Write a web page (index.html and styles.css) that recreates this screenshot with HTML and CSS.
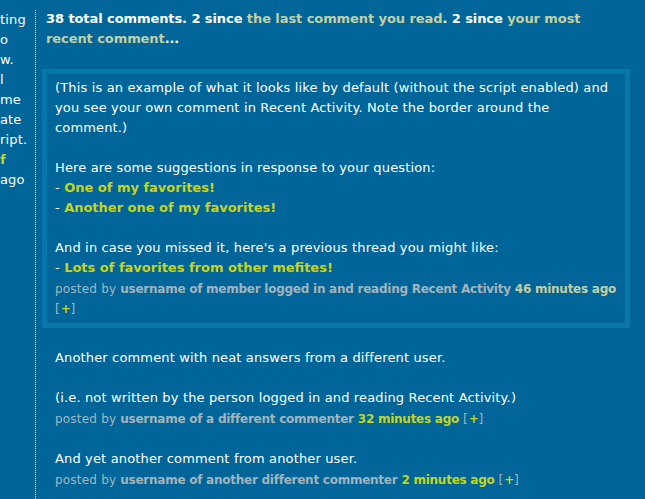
FILE: index.html
```html
<!DOCTYPE html>
<html>
<head>
<meta charset="utf-8">
<link rel="stylesheet" href="styles.css">
</head>
<body>
<div class="page">
  <div class="sidebar">
    <div class="frag">ting</div>
    <div class="frag">o</div>
    <div class="frag">w.</div>
    <div class="frag">l</div>
    <div class="frag">me</div>
    <div class="frag">ate</div>
    <div class="frag">ript.</div>
    <div class="frag"><a class="fav" href="#">f</a></div>
    <div class="frag">ago</div>
  </div>
  <div class="main">
    <div class="summary">38 total comments. 2 since <a class="visited" href="#">the last comment you read</a>. 2 since <a class="visited" href="#">your most recent comment</a>...</div>
    <div class="comments">
      <div class="comment own">
        (This is an example of what it looks like by default (without the script enabled) and you see your own comment in Recent Activity. Note the border around the comment.)<br><br>
        Here are some suggestions in response to your question:<br>
        - <a class="fav" href="#">One of my favorites!</a><br>
        - <a class="fav" href="#">Another one of my favorites!</a><br><br>
        And in case you missed it, here's a previous thread you might like:<br>
        - <a class="fav" href="#">Lots of favorites from other mefites!</a>
        <div class="byline">posted by <a class="user" href="#">username of member logged in and reading Recent Activity</a> <a class="visited" href="#">46 minutes ago</a> <span class="plus">[<a class="fav" href="#">+</a>]</span></div>
      </div>
      <div class="comment">
        Another comment with neat answers from a different user.<br><br>
        (i.e. not written by the person logged in and reading Recent Activity.)
        <div class="byline">posted by <a class="user" href="#">username of a different commenter</a> <a class="fav" href="#">32 minutes ago</a> <span class="plus">[<a class="fav" href="#">+</a>]</span></div>
      </div>
      <div class="comment">
        And yet another comment from another user.
        <div class="byline">posted by <a class="user" href="#">username of another different commenter</a> <a class="fav" href="#">2 minutes ago</a> <span class="plus">[<a class="fav" href="#">+</a>]</span></div>
      </div>
    </div>
  </div>
</div>
</body>
</html>
```

FILE: styles.css
```css
html, body {
  margin: 0;
  padding: 0;
  background: #006699;
}
body {
  font-family: "DejaVu Sans", Verdana, sans-serif;
  font-size: 13px;
  line-height: 20px;
  letter-spacing: 0.15px;
  color: #ffffff;
  height: 499px;
  overflow: hidden;
}
a {
  text-decoration: none;
  font-weight: bold;
  letter-spacing: 0;
}
.page {
  display: flex;
  padding-top: 10px;
  height: 489px;
}
.sidebar {
  width: 35px;
  overflow: hidden;
  white-space: nowrap;
}
.frag {
  height: 20px;
}
.main {
  flex: 1;
  border-left: 1px dotted #ffffff;
  padding-left: 10px;
  padding-right: 28px;
}
.summary {
  font-weight: bold;
  letter-spacing: -0.08px;
  margin-top: -1px;
}
.summary a {
  letter-spacing: -0.08px;
}
.visited {
  color: #c4cfa2;
}
.fav {
  color: #c5d41e;
}
.user {
  color: #a4b3bd;
}
.comments {
  margin-top: 20px;
  margin-left: 9px;
}
.comment {
  margin-bottom: 20px;
}
.comment.own {
  margin-left: -13px;
  margin-right: -13px;
  border: 5px solid #0a77aa;
  padding: 4px 8px;
}
.byline {
  color: #a3b6c4;
  font-size: 12px;
  letter-spacing: 0.2px;
  margin-top: 1px;
}
.byline a {
  letter-spacing: -0.25px;
}
.plus {
  color: #a3b6c4;
  letter-spacing: 1px;
}
```
